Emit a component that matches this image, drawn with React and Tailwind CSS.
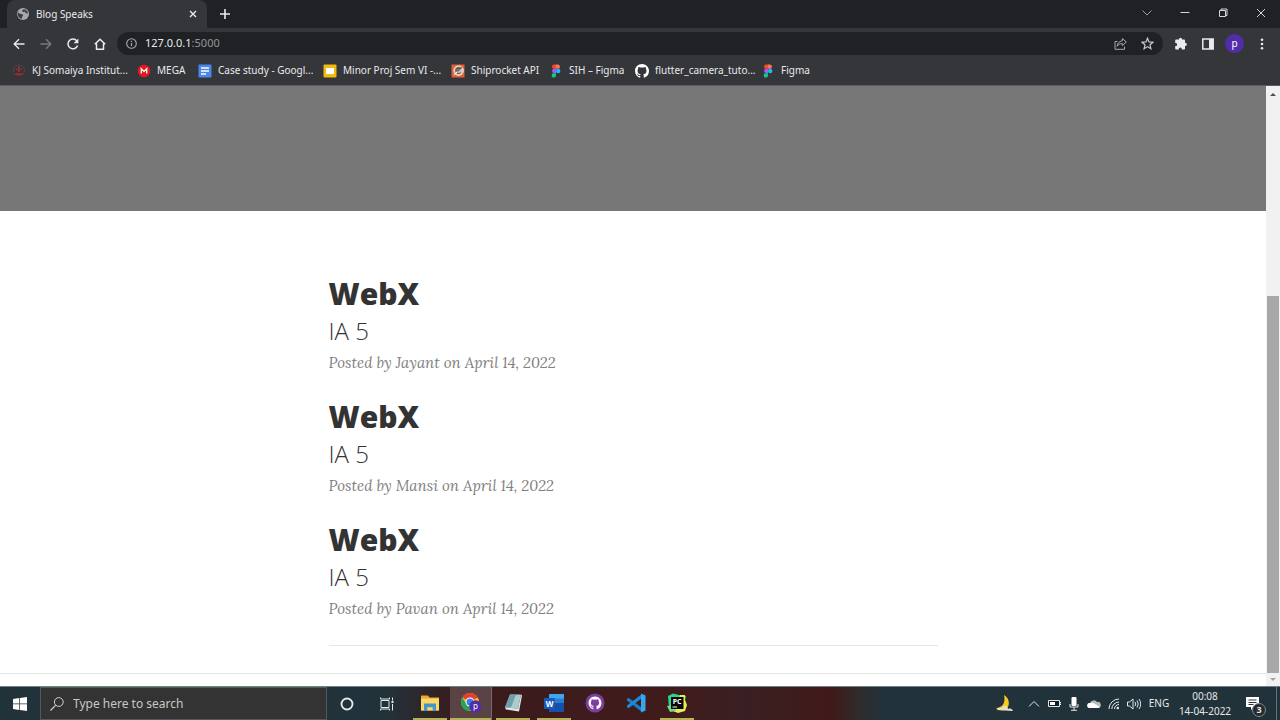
import React from "react";

const stroke = { fill: "none", stroke: "currentColor" };

function Svg({ box = "0 0 16 16", className = "size-4", children }) {
  return (
    <svg viewBox={box} className={`shrink-0 ${className}`} aria-hidden="true">
      {children}
    </svg>
  );
}

function IconButton({ label, className = "w-[27px]", children }) {
  return (
    <button aria-label={label} className={`flex h-full shrink-0 items-center justify-center ${className}`}>
      {children}
    </button>
  );
}

function FigmaIcon() {
  return (
    <Svg className="size-[14px]" box="0 0 14 14">
      <path d="M7 .5H4.800a2.200 2.200 0 0 0 0 4.300H7z" fill="#f24e1e" />
      <path d="M7 .5h2.200a2.200 2.200 0 0 1 0 4.300H7z" fill="#ff7262" />
      <path d="M7 4.800H4.800a2.200 2.200 0 0 0 0 4.300H7z" fill="#a259ff" />
      <circle cx="9.200" cy="7" r="2.200" fill="#1abcfe" />
      <path d="M7 9.200H4.800A2.200 2.200 0 1 0 7 11.400z" fill="#0acf83" />
    </Svg>
  );
}

const githubPath =
  "M8 0C3.58 0 0 3.58 0 8c0 3.54 2.29 6.53 5.47 7.59.4.07.55-.17.55-.38 0-.19-.01-.82-.01-1.49-2.01.37-2.53-.49-2.69-.94-.09-.23-.48-.94-.82-1.13-.28-.15-.68-.52-.01-.53.63-.01 1.08.58 1.23.82.72 1.21 1.87.87 2.33.66.07-.52.28-.87.51-1.07-1.78-.2-3.64-.89-3.64-3.95 0-.87.31-1.59.82-2.15-.08-.2-.36-1.02.08-2.12 0 0 .67-.21 2.2.82a7.6 7.6 0 0 1 4 0c1.53-1.04 2.2-.82 2.2-.82.44 1.1.16 1.92.08 2.12.51.56.82 1.27.82 2.15 0 3.07-1.87 3.75-3.65 3.95.29.25.54.73.54 1.48 0 1.07-.01 1.93-.01 2.2 0 .21.15.46.55.38A8 8 0 0 0 16 8c0-4.42-3.58-8-8-8z";

const bookmarks = [
  {
    text: "KJ Somaiya Institut...",
    width: "w-[125px]",
    icon: (
      <Svg className="size-[14px]" box="0 0 14 14">
        <circle cx="7" cy="6.500" r="5.500" fill="none" stroke="#65464a" strokeDasharray="2 1" />
        <path d="M6 2h2v2.500h2V6H8v3h2l1 2.500H3L4 9h2V6H4V4.500h2z" fill="#82323a" />
        <path d="M2 12h10M3 8.500h8" stroke="#55242b" />
      </Svg>
    ),
  },
  {
    text: "MEGA",
    width: "w-[61px]",
    icon: (
      <Svg className="size-[14px]" box="0 0 14 14">
        <circle cx="7" cy="7" r="6.300" fill="#e3171e" />
        <path d="M4.300 9.500V4.700L7 7.400l2.700-2.700v4.800" {...stroke} strokeWidth="1.400" />
      </Svg>
    ),
  },
  {
    text: "Case study - Googl...",
    width: "w-[125px]",
    icon: (
      <Svg className="size-[14px]" box="0 0 14 14">
        <rect x=".5" y=".5" width="13" height="13" rx="1" fill="#4b86ea" />
        <path d="M3 4h8M3 7h8M3 10h5" stroke="#fff" strokeWidth="1.300" />
      </Svg>
    ),
  },
  {
    text: "Minor Proj Sem VI -...",
    width: "w-[128px]",
    icon: (
      <Svg className="size-[14px]" box="0 0 14 14">
        <rect x=".5" y=".5" width="13" height="13" rx="1" fill="#f2b90f" />
        <path d="M3 4h8v6H3z" fill="#fff" />
      </Svg>
    ),
  },
  {
    text: "Shiprocket API",
    width: "w-[98px]",
    icon: (
      <Svg className="size-[14px]" box="0 0 14 14">
        <rect x=".5" y=".5" width="13" height="13" fill="#de6236" />
        <circle cx="7.600" cy="6.600" r="4.700" fill="#cfc3bd" stroke="#fff" strokeWidth=".8" />
        <path d="M10 4.500a3 3 0 1 0 0 4M5 5l5-1-3 3z" fill="none" stroke="#6d4d48" strokeWidth="1.100" />
        <path d="m3 11 3-3" stroke="#fff" />
      </Svg>
    ),
  },
  { text: "SIH – Figma", width: "w-[86px]", icon: <FigmaIcon /> },
  {
    text: "flutter_camera_tuto...",
    width: "w-[126px]",
    icon: (
      <Svg className="size-[14px]">
        <path d={githubPath} fill="#fff" />
      </Svg>
    ),
  },
  { text: "Figma", width: "w-[60px]", icon: <FigmaIcon /> },
];

function TabStrip() {
  return (
    <div className="flex h-7 shrink-0 items-stretch bg-[#202124]">
      <div className="ml-[7px] flex w-[200px] items-center rounded-t-lg bg-[#35363a] pr-[6px] pl-[10px] text-[#e8eaed]">
        <Svg className="size-3" box="0 0 12 12">
          <circle cx="6" cy="6" r="6" fill="#a5a8ac" />
          <path d="M1 4.500 3.500 6l2 .3.7 1.500-1.200 1-.3 2.200C2.500 10.400.8 8.400.7 6zM6 1.500 5 3l1.200 1L8 3.500 8.500 5l2.300.7-.3-2L8.500 1.500z" fill="#3c3d42" />
        </Svg>
        <span className="ml-[7px] grow text-[10px]">Blog Speaks</span>
        <IconButton label="Close tab" className="w-4">
          <Svg className="size-2" box="0 0 8 8">
            <path d="m1 1 6 6M7 1 1 7" {...stroke} strokeWidth="1.400" />
          </Svg>
        </IconButton>
      </div>
      <IconButton label="New tab" className="w-9 text-[#e8eaed]">
        <Svg className="size-[10px]" box="0 0 10 10">
          <path d="M5 0v10M0 5h10" {...stroke} strokeWidth="1.600" />
        </Svg>
      </IconButton>
      <div className="ml-auto flex pb-[2px] text-[#d5d6d8]">
        <IconButton label="Search tabs" className="w-[38px]">
          <Svg className="size-[10px] text-[#9c9da0]" box="0 0 10 10">
            <path d="m.5 2.500 4.500 4.500 4.500-4.500" {...stroke} />
          </Svg>
        </IconButton>
        <IconButton label="Minimize" className="w-[38px]">
          <Svg className="size-[10px]" box="0 0 10 10">
            <path d="M.5 4.500h9" {...stroke} />
          </Svg>
        </IconButton>
        <IconButton label="Restore" className="w-[38px]">
          <Svg className="size-[10px]" box="0 0 10 10">
            <path d="M1.500 2.500h6v6h-6zM3 2V1h6v6.500H8" {...stroke} />
          </Svg>
        </IconButton>
        <IconButton label="Close window" className="w-[38px]">
          <Svg className="size-[10px]" box="0 0 10 10">
            <path d="m1 1 8 8M9 1 1 9" {...stroke} />
          </Svg>
        </IconButton>
      </div>
    </div>
  );
}

function Toolbar() {
  return (
    <div className="flex h-[31px] shrink-0 items-center bg-[#35363a] px-[5px] text-[#e8eaed]">
      <IconButton label="Back">
        <Svg className="size-3" box="0 0 12 12">
          <path d="M11.500 6h-10M6 1.200 1.200 6 6 10.800" {...stroke} strokeWidth="1.400" />
        </Svg>
      </IconButton>
      <IconButton label="Forward">
        <Svg className="size-3 text-[#77797d]" box="0 0 12 12">
          <path d="M.5 6h10M6 1.200 10.800 6 6 10.800" {...stroke} strokeWidth="1.400" />
        </Svg>
      </IconButton>
      <IconButton label="Reload">
        <Svg className="size-3" box="0 0 12 12">
          <path d="M10.600 7.500A4.900 4.900 0 1 1 9.800 2.900" {...stroke} strokeWidth="1.500" />
          <path d="M11.400.5v4.800H6.600z" fill="currentColor" />
        </Svg>
      </IconButton>
      <IconButton label="Home">
        <Svg className="size-3" box="0 0 12 12">
          <path d="M.8 6.300 6 1.200l5.200 5.100M2.500 5.500v5.700h7V5.500" {...stroke} strokeWidth="1.500" />
        </Svg>
      </IconButton>
      <form className="mx-1 flex h-[23px] grow items-center rounded-full bg-[#202124] pr-[2px] pl-[9px]">
        <Svg className="size-[11px] text-[#a5a8ac]" box="0 0 11 11">
          <circle cx="5.500" cy="5.500" r="4.800" {...stroke} strokeWidth="1.100" />
          <path d="M5.500 5v3M5.500 2.700v1.200" {...stroke} strokeWidth="1.200" />
        </Svg>
        <button type="button" aria-label="Address" className="ml-2 grow text-left text-[11px]">
          127.0.0.1<span className="text-[#94969a]">:5000</span>
        </button>
        <IconButton label="Share">
          <Svg className="size-[13px] text-[#a5a8ac]" box="0 0 13 13">
            <path d="M3.500 4.500H1v7.800h9.500V9.500M8.300 1.500l4 3.500-4 3.500V6.600c-2.500 0-4 .7-5.200 2.700.3-3 2-5 5.200-5.500z" {...stroke} />
          </Svg>
        </IconButton>
        <IconButton label="Bookmark this tab">
          <Svg className="size-[13px] text-[#c9cbce]" box="0 0 13 13">
            <path d="m6.500 1.200 1.500 3.700 4 .3L9 7.800l.9 3.900-3.400-2.100-3.400 2.100L4 7.800 1 5.200l4-.3z" {...stroke} strokeWidth="1.200" />
          </Svg>
        </IconButton>
      </form>
      <IconButton label="Extensions">
        <Svg className="size-[13px]" box="0 0 13 13">
          <path d="M5 2.200a1.500 1.500 0 0 1 3 0v.4h2.200c.5 0 .8.300.8.800v2.300h.3a1.600 1.600 0 0 1 0 3.200H11v2.800c0 .5-.3.800-.8.800H7.800V12a1.500 1.500 0 0 0-3 0v.5H2c-.5 0-.8-.3-.8-.8V9h.5a1.500 1.500 0 0 0 0-3h-.5V3.400c0-.5.3-.8.8-.8h3z" fill="currentColor" />
        </Svg>
      </IconButton>
      <IconButton label="Side panel">
        <Svg className="size-3" box="0 0 12 12">
          <path d="M.8 1h10.400v10H.8z" {...stroke} strokeWidth="1.500" />
          <path d="M7 1h4v10H7z" fill="currentColor" />
        </Svg>
      </IconButton>
      <IconButton label="Profile">
        <span className="flex size-[19px] items-center justify-center rounded-full bg-[#512da8] pb-px text-[10px] leading-3 text-white">p</span>
      </IconButton>
      <IconButton label="Menu">
        <Svg className="size-3" box="0 0 12 12">
          <g fill="currentColor">
            <circle cx="6" cy="1.700" r="1.300" />
            <circle cx="6" cy="6" r="1.300" />
            <circle cx="6" cy="10.300" r="1.300" />
          </g>
        </Svg>
      </IconButton>
    </div>
  );
}

function BookmarksBar() {
  return (
    <nav aria-label="Bookmarks" className="flex h-[27px] shrink-0 items-center border-b border-[#5c5d60] bg-[#35363a] pb-[3px] pl-3 text-[10px] text-[#e8eaed]">
      {bookmarks.map((b, i) => (
        <a key={i} href="#" className={`flex shrink-0 items-center gap-[6px] whitespace-nowrap ${b.width}`}>
          {b.icon}
          {b.text}
        </a>
      ))}
    </nav>
  );
}

function Post({ author }) {
  return (
    <article className="h-[123px] pt-[9px]">
      <a href="#">
        <h2 className="text-[30px] leading-[38px] font-extrabold text-[#333333]">WebX</h2>
        <h3 className="text-[24px] leading-9 font-light text-[#333333]">IA 5</h3>
      </a>
      <p className="font-['Lora','Liberation_Serif',serif] text-[15px] leading-7 text-[#808080] italic">
        Posted by {author} on April 14, 2022
      </p>
    </article>
  );
}

function Page() {
  return (
    <div className="flex min-h-0 grow bg-white">
      <main className="flex min-w-0 grow flex-col overflow-hidden font-['Open_Sans',sans-serif]">
        <header className="h-[125px] shrink-0 bg-[#777777]" />
        <section className="mx-auto mt-[55px] w-full max-w-[609px]">
          {["Jayant", "Mansi", "Pavan"].map((a) => (
            <Post key={a} author={a} />
          ))}
          <hr className="mt-[10px] border-[#e6e6e6]" />
        </section>
        <hr className="mt-[27px] border-[#e6e6e6]" />
      </main>
      <div className="flex w-[14px] shrink-0 flex-col items-center bg-[#f1f1f1]">
        <button aria-label="Scroll up" className="flex h-4 w-full items-center justify-center text-[#505050]">
          <Svg className="h-[3px] w-[6px]" box="0 0 6 3">
            <path d="M0 3 3 0l3 3z" fill="currentColor" />
          </Svg>
        </button>
        <div className="grow" />
        <div className="h-[377px] w-3 bg-[#a8a8a8]" />
        <button aria-label="Scroll down" className="flex h-[13px] w-full items-center justify-center text-[#a3a3a3]">
          <Svg className="h-[3px] w-[6px]" box="0 0 6 3">
            <path d="M0 0h6L3 3z" fill="currentColor" />
          </Svg>
        </button>
      </div>
    </div>
  );
}

const apps = [
  {
    name: "File Explorer",
    running: true,
    icon: (
      <>
        <path d="M1 2.500h7l1.500 2H19v13H1z" fill="#e8a82b" />
        <path d="M1 5.500h18v12H1z" fill="#fcd768" />
        <path d="M4 18v-7.500h12V18h-3.300v-3.800H7.300V18z" fill="#4296cc" />
      </>
    ),
  },
  {
    name: "Google Chrome",
    running: true,
    active: true,
    icon: (
      <>
        <circle cx="9" cy="9" r="9" fill="#f9c51c" />
        <path d="M9 9 1.200 4.500a9 9 0 0 1 15.600 0z" fill="#e24132" />
        <path d="M9 9 9 18A9 9 0 0 1 1.200 4.500L5.500 11z" fill="#26a557" />
        <circle cx="9" cy="9" r="4.500" fill="#fff" />
        <circle cx="9" cy="9" r="3.500" fill="#377eea" />
        <circle cx="14.500" cy="13.500" r="6.300" fill="#512da8" />
        <text x="14.500" y="16" textAnchor="middle" fontSize="8" fill="#fff">p</text>
      </>
    ),
  },
  {
    name: "Notepad",
    running: true,
    icon: (
      <>
        <path d="M7 1.500h11l-3 14-13-1z" fill="#a9ccd0" />
        <path d="M7 1.500h6l-5 13-6 0z" fill="#6f9fa7" />
        <path d="m2 14.500 13 1 3-14 1 1-3 16-13-2z" fill="#e3e8e7" />
      </>
    ),
  },
  {
    name: "Word",
    running: true,
    icon: (
      <>
        <rect x="5" y="1" width="15" height="18" rx="1" fill="#2b7cd3" />
        <path d="M5 2q0-1 1-1h13q1 0 1 1v3.500H5z" fill="#41a5ee" />
        <path d="M5 10h15v8q0 1-1 1H6q-1 0-1-1z" fill="#1650a8" />
        <rect y="5" width="11" height="11" rx="1" fill="#195abd" />
        <text x="5.500" y="13.500" textAnchor="middle" fontSize="8" fontWeight="700" fill="#fff">W</text>
      </>
    ),
  },
  {
    name: "GitHub Desktop",
    icon: (
      <>
        <circle cx="10" cy="10" r="9.500" fill="#7b3fa0" />
        <path d={githubPath} fill="#fff" transform="translate(3.500 3.500) scale(.81)" />
      </>
    ),
  },
  {
    name: "Visual Studio Code",
    icon: (
      <>
        <path d="m1 6 1.500-1.200L16 15v4L1 7.500z" fill="#1681cb" />
        <path d="m1 14 1.500 1.200L16 5V1L1 12.500z" fill="#1b8bd7" />
        <path d="m15 .5 4.500 2v15l-4.500 2z" fill="#35a7ee" />
      </>
    ),
  },
  {
    name: "PyCharm",
    running: true,
    icon: (
      <>
        <path d="m1 3 5-2.500L12 2l7 1-3 14-8 2-6-4z" fill="#28d78b" />
        <path d="m13 2 5 0 0 5 2 5-2 6-7 2-5-2z" fill="#e4ee5a" />
        <path d="m0 13 3 6 6-1-3-6z" fill="#6bdc8d" />
        <rect x="4" y="4" width="12.500" height="12" fill="#080808" />
        <text x="10.200" y="10.500" textAnchor="middle" fontSize="7" fontWeight="700" fill="#fff">PC</text>
        <path d="M5.500 14h4.500" stroke="#fff" />
      </>
    ),
  },
];

function Taskbar() {
  return (
    <footer className="flex h-[34px] shrink-0 items-stretch border-t border-[#718084] bg-[linear-gradient(90deg,#21323a_0%,#21323a_30%,#3a1b1c_36%,#411b1c_53%,#3a2023_58%,#401a19_65%,#302b2b_67%,#21323a_69%)] text-[#e5e8e9]">
      <IconButton label="Start" className="w-10">
        <Svg className="size-[14px]" box="0 0 14 14">
          <path d="m0 2 6.300-.9v5.500H0zM7 1l7-1v6.600H7zM0 7.300h6.300v5.600L0 12zM7 7.300h7V14l-7-1z" fill="#fff" />
        </Svg>
      </IconButton>
      <label className="flex w-[287px] items-center border border-[#53585a] bg-[#333333] pl-[9px]">
        <Svg className="size-[14px] text-[#d2d2d2]" box="0 0 14 14">
          <circle cx="8.800" cy="5" r="4.400" {...stroke} />
          <path d="M5.500 8.300.5 13.500" {...stroke} strokeWidth="1.200" />
        </Svg>
        <input aria-label="Search" placeholder="Type here to search" className="ml-[9px] min-w-0 grow bg-transparent text-[12px] outline-none placeholder:text-[#c8c8c8]" />
      </label>
      <IconButton label="Cortana" className="w-10">
        <Svg className="size-[14px]" box="0 0 14 14">
          <circle cx="7" cy="7" r="5.500" {...stroke} strokeWidth="1.900" />
        </Svg>
      </IconButton>
      <IconButton label="Task view" className="w-10">
        <Svg className="size-[14px]" box="0 0 14 14">
          <path d="M1 3.500h8v7H1zM.5.500v1.500h9V.500M.5 13.500V12h9v1.500M12.500.500v3M12.500 7v6.500" {...stroke} />
          <path d="M11.500 4h2v2h-2z" fill="currentColor" />
        </Svg>
      </IconButton>
      <div className="ml-[2px] flex">
        {apps.map((app) => (
          <button key={app.name} aria-label={app.name} className={`flex items-center justify-center ${app.active ? "w-[42px] border-r border-[#77686a] bg-[#594345]" : "w-[41px]"}`}>
            <span className={`flex h-full items-center justify-center border-b-2 ${app.active ? "w-full" : "w-[34px]"} ${app.running ? "border-[#b4b455]" : "border-transparent"}`}>
              <Svg className="size-5" box="0 0 20 20">{app.icon}</Svg>
            </span>
          </button>
        ))}
      </div>
      <div className="ml-auto flex items-stretch">
        <IconButton label="Weather" className="w-10">
          <Svg className="size-[18px]" box="0 0 18 18">
            <path d="M9 0c6 3 7 13 0 15-4 1-7-.5-8-2C7 13 11 8 9 0z" fill="#f5cb24" />
            <path d="M2 15c1-3 4-3 5-2 2-4 6-2 6 1 3-1 4 0 5 2z" fill="#e9dfc3" />
          </Svg>
        </IconButton>
        <IconButton label="Show hidden icons" className="w-5">
          <Svg className="size-3" box="0 0 12 12"><path d="m1 8.500 5-5 5 5" {...stroke} /></Svg>
        </IconButton>
        <IconButton label="Battery" className="w-5">
          <Svg className="h-[9px] w-[13px]" box="0 0 13 9">
            <path d="M.5 1.500h11v6H.5zM12 3.500h1v2h-1" {...stroke} />
            <path d="M1 2h10v5H1z" fill="#111b20" />
            <path d="M2 3h5v3H2z" fill="#fff" />
          </Svg>
        </IconButton>
        <IconButton label="Microphone" className="w-5">
          <Svg className="size-[14px]" box="0 0 14 14">
            <rect x="4.500" width="5" height="9" rx="1" fill="#fff" />
            <path d="M3 7v3h8V7M7 10v3M4 13.300h6" {...stroke} />
          </Svg>
        </IconButton>
        <IconButton label="OneDrive" className="w-5">
          <Svg className="h-[10px] w-[14px]" box="0 0 14 10">
            <path d="M2.500 9a2.500 2.500 0 0 1 .5-5 4 4 0 0 1 7-1 3 3 0 0 1 1.500 6z" fill="#b9bcbc" />
            <path d="M2.500 9a2.500 2.500 0 0 1 .5-5q2-1 5 1l5 3q-1 1-2 1z" fill="#fff" />
          </Svg>
        </IconButton>
        <IconButton label="Wi-Fi" className="w-5">
          <Svg className="size-3" box="0 0 12 12">
            <path d="M1 11A10 10 0 0 1 11 1M3.800 11A7.200 7.200 0 0 1 11 4M6.500 11A4.500 4.500 0 0 1 11 6.500" {...stroke} />
            <circle cx="9.800" cy="10" r="1.300" fill="currentColor" />
          </Svg>
        </IconButton>
        <IconButton label="Volume" className="w-5">
          <Svg className="h-3 w-[14px]" box="0 0 14 12">
            <path d="M.5 4v4h2L6 11V1L2.500 4zM8 4q1.500 2 0 4M10 2.500q2.500 3.500 0 7M12 1q3.500 5 0 10" {...stroke} />
          </Svg>
        </IconButton>
        <button className="w-[30px] text-center text-[10px]">ENG</button>
        <button className="w-[62px] text-center text-[10px] leading-[15px]">
          00:08
          <br />
          14-04-2022
        </button>
        <button aria-label="3 notifications" className="relative flex w-[41px] items-center border-r border-[#66747a] pl-[10px]">
          <Svg className="size-[13px]" box="0 0 13 13">
            <path d="M0 0h13v10H8l-3 3v-3H0z" fill="#fff" />
            <path d="M2.500 3h8M2.500 5.500h8M2.500 7.500h5" stroke="#26363d" />
          </Svg>
          <span className="absolute top-4 left-4 flex size-[14px] items-center justify-center rounded-full border border-[#858b8e] bg-[#252b2f] text-[9px] leading-3 font-bold">3</span>
        </button>
        <span className="w-[3px]" />
      </div>
    </footer>
  );
}

export default function App() {
  return (
    <div className="flex h-screen flex-col overflow-hidden font-['Noto_Sans','Open_Sans',sans-serif]">
      <TabStrip />
      <Toolbar />
      <BookmarksBar />
      <Page />
      <Taskbar />
    </div>
  );
}
